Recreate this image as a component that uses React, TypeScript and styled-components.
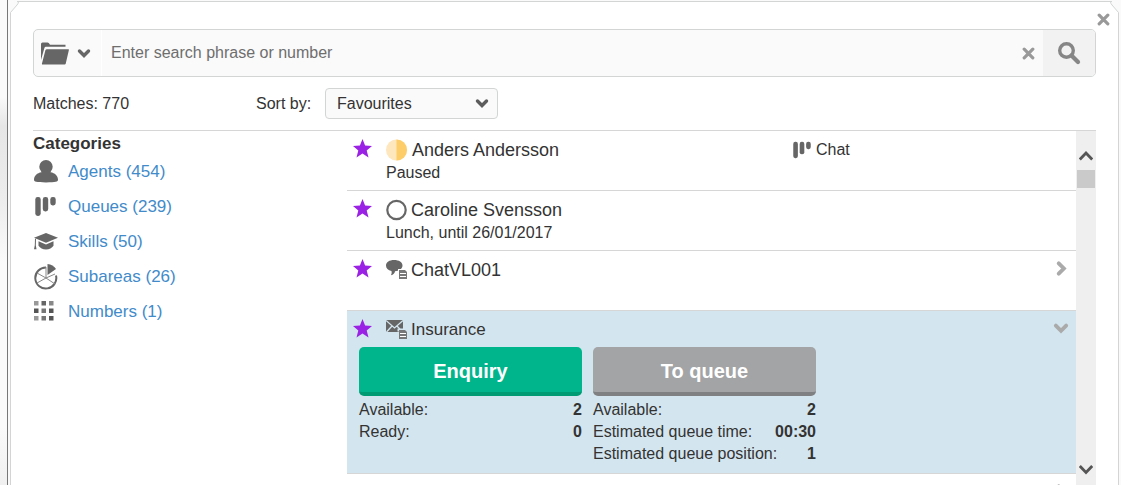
import React from 'react';
import styled, { createGlobalStyle, css } from 'styled-components';

const GlobalStyle = createGlobalStyle`
  *, *::before, *::after { box-sizing: border-box; }
  body {
    margin: 0;
    background: #fafafa;
    color: #333;
    font: 16px/22px "Liberation Sans", Arial, sans-serif;
  }
  button, input, select { font: inherit; color: inherit; margin: 0; }
  svg { display: block; flex: none; }
`;

const Page = styled.div`
  display: flex;
  height: 100vh;
  overflow: hidden;
`;

const Edge = styled.div`
  flex: none;
  width: 8px;
  border-right: 1px solid #777;
  background: linear-gradient(#fafafa 20%, #e6e6e6 26%, #ededed 42%, #fafafa 54%, #fafafa 88%, #f0f0f0);
`;

const Panel = styled.main`
  position: relative;
  flex: 1;
  min-width: 0;
  display: flex;
  flex-direction: column;
  margin: 1px 2px 0;
  padding: 27px 22px 0;
  background: #fff;
  border: 1px solid #d3d5d5;
  border-bottom: 0;
`;

const Corner = styled.svg<{ $right?: boolean }>`
  position: absolute;
  top: -1px;
  ${p => (p.$right ? css`right: -1px; transform: scaleX(-1);` : css`left: -1px;`)}
`;

const IconButton = styled.button`
  display: flex;
  align-items: center;
  justify-content: center;
  padding: 0;
  border: 0;
  background: none;
  color: #999;
  cursor: pointer;
`;

const CloseButton = styled(IconButton)`
  position: absolute;
  top: 10px;
  right: 7px;
  width: 15px;
  height: 15px;
`;

const SearchBar = styled.form`
  flex: none;
  display: flex;
  height: 48px;
  border: 1px solid #d3d5d5;
  border-radius: 5px;
  background: #fafafa;
  overflow: hidden;
`;

const ScopeButton = styled(IconButton)`
  gap: 8px;
  width: 68px;
  padding-right: 3px;
  border-right: 1px solid #fff;
  color: #666;
`;

const SearchInput = styled.input`
  flex: 1;
  min-width: 0;
  padding: 0 9px;
  border: 0;
  outline: 0;
  background: transparent;
  &::placeholder { color: #6e6e6e; opacity: 1; }
`;

const ClearButton = styled(IconButton)`
  width: 30px;
`;

const SubmitButton = styled(IconButton)`
  width: 52px;
  background: #f2f2f2;
  color: #868686;
`;

const Filters = styled.div`
  flex: none;
  display: flex;
  align-items: center;
  height: 53px;
`;

const Matches = styled.div`
  width: 223px;
`;

const SortLabel = styled.label`
  width: 69px;
`;

const SelectWrap = styled.div`
  display: grid;
  align-items: center;
  width: 173px;
  > * { grid-area: 1 / 1; }
  > svg { justify-self: end; margin-right: 9px; pointer-events: none; color: #5c5c5c; }
`;

const Select = styled.select`
  appearance: none;
  width: 100%;
  height: 31px;
  padding: 0 11px;
  border: 1px solid #d3d5d5;
  border-radius: 4px;
  background: #fafafa;
`;

const Body = styled.div`
  flex: 1;
  min-height: 0;
  display: flex;
  border-top: 1px solid #d6d6d6;
`;

const Sidebar = styled.nav`
  flex: none;
  width: 314px;
  font-size: 17px;
`;

const SidebarTitle = styled.h2`
  margin: 0;
  padding-top: 2px;
  font-size: 17px;
  line-height: 21px;
`;

const CategoryList = styled.ul`
  margin: 0;
  padding: 0;
  list-style: none;
`;

const Category = styled.li`
  display: grid;
  grid-template-columns: 25px 1fr;
  column-gap: 10px;
  align-items: center;
  height: 35px;
  > svg { justify-self: center; }
`;

const CategoryLink = styled.a`
  color: #428bca;
  text-decoration: none;
  &:hover { text-decoration: underline; }
`;

const Results = styled.ul`
  flex: 1;
  min-width: 0;
  margin: -1px 0 0;
  padding: 0;
  list-style: none;
  overflow: hidden;
`;

const Row = styled.li<{ $selected?: boolean }>`
  display: grid;
  grid-template-columns: 33px 11fr 7fr 18px;
  align-content: start;
  min-height: 60px;
  padding: 7px 6px 0;
  border-top: 1px solid #d6d6d6;
  background: ${p => (p.$selected ? '#d3e5ee' : '#fff')};
`;

const StarButton = styled(IconButton)`
  justify-content: flex-start;
  height: 21px;
  color: #9a22e4;
`;

const Title = styled.div<{ $small?: boolean }>`
  display: flex;
  align-items: center;
  gap: 4px;
  height: 24px;
  font-size: ${p => (p.$small ? 17 : 18)}px;
`;

const Service = styled.div`
  display: flex;
  align-items: center;
  gap: 5px;
  height: 24px;
`;

const ExpandButton = styled(IconButton)`
  grid-column: 4;
  height: 21px;
  color: #aaa;
`;

const Actions = styled.div`
  grid-column: 1 / -1;
  display: flex;
  gap: 11px;
  padding: 5px 6px 8px;
`;

const Action = styled.section`
  width: 223px;
`;

const ActionButton = styled.button<{ $primary?: boolean }>`
  display: block;
  width: 100%;
  height: 49px;
  margin-bottom: 3px;
  padding: 2px 0 0;
  border: 0;
  border-bottom: 4px solid ${p => (p.$primary ? '#009a73' : '#7f8081')};
  border-radius: 5px;
  background: ${p => (p.$primary ? '#00b58c' : '#a3a4a5')};
  color: #fff;
  font-size: 20px;
  font-weight: bold;
  cursor: pointer;
`;

const Stat = styled.div`
  display: flex;
  justify-content: space-between;
`;

const Scrollbar = styled.div`
  flex: none;
  display: flex;
  flex-direction: column;
  justify-content: space-between;
  width: 20px;
  padding: 16px 0 7px;
  background: #efefef;
`;

const ScrollButton = styled(IconButton)`
  width: 20px;
  height: 18px;
  color: #555;
`;

const Thumb = styled.div`
  height: 18px;
  margin: 5px 1px 0;
  background: #cacaca;
`;

const chevrons = {
  down: 'M2.500 3l4.500 4.500L11.500 3',
  right: 'M5 1l4.500 4.500L5 10',
};

function Chevron({ to, size = 14 }: { to: keyof typeof chevrons; size?: number }) {
  return (
    <svg width={size} height={size - 3} viewBox="0 0 14 11" overflow="visible" fill="none" stroke="currentColor" strokeWidth="3.400">
      <path d={chevrons[to]} strokeLinecap="round" />
    </svg>
  );
}

const ScrollArrow = ({ up }: { up?: boolean }) => (
  <svg width="14" height="11" viewBox="0 0 14 11" fill="none" stroke="currentColor" strokeWidth="2.800">
    <path d={up ? 'M.8 8.500L7 2l6.200 6.500' : 'M.8 2L7 8.500 13.200 2'} />
  </svg>
);

const Cross = () => (
  <svg width="13" height="13" viewBox="0 0 13 13" stroke="currentColor" strokeWidth="3.200" strokeLinecap="round">
    <path d="M2.200 2.200l8.600 8.600M10.800 2.200l-8.600 8.600" />
  </svg>
);

const Folder = () => (
  <svg width="28" height="23" viewBox="0 0 28 23" fill="currentColor">
    <path d="M0 18V2q0-1.500 1.500-1.500h5Q8 .5 8.500 2l.5.800h15.500v2H5Q3.800 4.800 3.400 6z" />
    <path d="M6 7.300h21.500q.6 0 .4.800l-3.200 13.600q-.2.800-1 .8H1.500q-.8 0-.6-.8L4.400 8.300q.3-1 1.600-1z" />
  </svg>
);

const Magnifier = () => (
  <svg width="24" height="24" viewBox="0 0 24 24" fill="none" stroke="currentColor">
    <circle cx="9.500" cy="9.500" r="6.800" strokeWidth="3.400" />
    <path d="M14.500 14.500l6.500 6.500" strokeWidth="4.200" strokeLinecap="round" />
  </svg>
);

const Star = () => (
  <svg width="19" height="19" viewBox="0 0 19 19" fill="currentColor">
    <path d="M9.500 0l2.600 6.500 6.900.500-5.300 4.400 1.800 7-6-3.900-6 3.900 1.800-7L0 7l6.900-.5z" />
  </svg>
);

const Person = () => (
  <svg width="24" height="23" viewBox="0 0 24 23" fill="#666">
    <ellipse cx="12" cy="6.800" rx="6.700" ry="6.800" />
    <path d="M7.500 11h9v1.300c4.500.7 7.200 3.500 7.500 7.200.1 2.200-1.500 3-12 3s-12.100-.8-12-3c.3-3.700 3-6.500 7.500-7.200z" />
  </svg>
);

const Bars = ({ size = 21 }: { size?: number }) => (
  <svg width={size} height={size} viewBox="0 0 21 21" fill="#666">
    <rect x=".3" y="1" width="5.400" height="19" rx="2.400" />
    <rect x="7.800" y="1" width="5.400" height="14.500" rx="2.400" />
    <rect x="15.300" y="1" width="5.400" height="8.500" rx="2.400" />
  </svg>
);

const Cap = () => (
  <svg width="24" height="17" viewBox="0 0 24 17" fill="#666">
    <path d="M12 0l12 4.800L12 9.800 0 4.800z" />
    <path d="M4.500 8.300L12 11.400l7.500-3.100v4.500Q17 16.500 12 16.500t-7.500-3.700z" />
    <path d="M1 5.500l1 .4-.2 6.300.7 4H0l.8-4z" />
  </svg>
);

const Pie = () => (
  <svg width="24" height="26" viewBox="0 0 24 26" fill="none" stroke="#666">
    <path d="M12 3.500A10.500 10.500 0 1 0 22 11.500" strokeWidth="2" />
    <path d="M12 3v11l-9 5M12 14l9 6M12 14L3 9M12 14l9-4" strokeWidth="1" stroke="#888" />
    <path d="M13.500 0q5.500.500 8.500 5l-8.500 6z" fill="#666" stroke="none" />
  </svg>
);

const dots = ['#999', '#666', '#888', '#555', '#777', '#555', '#999', '#777', '#555'];
const DotGrid = () => (
  <svg width="23" height="22" viewBox="0 0 23 22">
    {dots.map((c, i) => (
      <rect key={i} x={(i % 3) * 7.5} y={Math.floor(i / 3) * 7.5} width="4.500" height="4.500" fill={c} />
    ))}
  </svg>
);

const Paused = () => (
  <svg width="22" height="22" viewBox="0 0 22 22">
    <circle cx="10.500" cy="11" r="10.500" fill="#fee6bd" />
    <path d="M10.500.5a10.500 10.500 0 0 1 0 21z" fill="#fdcd69" />
  </svg>
);

const Away = () => (
  <svg width="21" height="22" viewBox="0 0 21 22">
    <circle cx="10.500" cy="11" r="9.200" fill="#fff" stroke="#666" strokeWidth="2.200" />
  </svg>
);

const Sheet = () => (
  <>
    <path d="M14 10h5l2 2v7h-8v-9z" fill="#777" />
    <path d="M14 13.500h6M14 16.500h6" stroke="#fff" strokeWidth="1" />
  </>
);

const ChatIcon = () => (
  <svg width="21" height="20" viewBox="0 0 21 20">
    <path d="M8 0c5 0 8.500 2.200 8.500 5.500S13 11 9 11.300q-.5 3-4 4 1.200-2 .5-4.300C2 10.200 0 8.300 0 5.500 0 2.200 3.500 0 8 0z" fill="#666" />
    <path d="M12 9h7v3h-7z" fill="#fff" />
    <Sheet />
  </svg>
);

const MailIcon = () => (
  <svg width="21" height="20" viewBox="0 0 21 20">
    <path d="M0 0h17v12H0z" fill="#666" />
    <path d="M0 .5l8.500 7.500L17 .5M.5 12l5.500-6M16.500 12L11 6" fill="none" stroke="#d3e5ee" strokeWidth="1.300" />
    <path d="M11.500 8.500H21v3h-9.500z" fill="#d3e5ee" />
    <Sheet />
  </svg>
);

const categories = [
  { label: 'Agents (454)', icon: <Person /> },
  { label: 'Queues (239)', icon: <Bars /> },
  { label: 'Skills (50)', icon: <Cap /> },
  { label: 'Subareas (26)', icon: <Pie /> },
  { label: 'Numbers (1)', icon: <DotGrid /> },
];

interface ResultProps {
  name: string;
  icon: React.ReactNode;
  note?: string;
  service?: string;
  expand?: 'right' | 'down';
  children?: React.ReactNode;
}

const Expander = ({ to }: { to: 'right' | 'down' }) => (
  <ExpandButton type="button" aria-label="Details"><Chevron to={to} size={16} /></ExpandButton>
);

function Result({ name, icon, note, service, expand, children }: ResultProps) {
  return (
    <Row $selected={expand === 'down'}>
      <StarButton type="button" aria-label="Favourite"><Star /></StarButton>
      <div>
        <Title $small={expand === 'down'}>{icon}{name}</Title>
        {note}
      </div>
      {service && <Service><Bars size={18} />{service}</Service>}
      {expand && <Expander to={expand} />}
      {children}
    </Row>
  );
}

const StatLine = ({ label, value }: { label: string; value: string }) => (
  <Stat><span>{label}</span><b>{value}</b></Stat>
);

const CornerCut = ({ right }: { right?: boolean }) => (
  <Corner $right={right} width="9" height="12" viewBox="0 0 9 12">
    <path d="M0 0h9L8 2.500 0 12z" fill="#fafafa" />
    <path d="M7 .5h2M8.500 .5q0 2-1.500 3.500L.5 11.500" fill="none" stroke="#d3d5d5" />
  </Corner>
);

export default function App() {
  return (
    <Page>
      <GlobalStyle />
      <Edge />
      <Panel>
        <CornerCut />
        <CornerCut right />
        <CloseButton type="button" aria-label="Close"><Cross /></CloseButton>
        <SearchBar>
          <ScopeButton type="button" aria-label="Search in"><Folder /><Chevron to="down" /></ScopeButton>
          <SearchInput aria-label="Search" placeholder="Enter search phrase or number" />
          <ClearButton type="reset" aria-label="Clear"><Cross /></ClearButton>
          <SubmitButton type="submit" aria-label="Search"><Magnifier /></SubmitButton>
        </SearchBar>
        <Filters>
          <Matches>Matches: 770</Matches>
          <SortLabel htmlFor="sort">Sort by:</SortLabel>
          <SelectWrap>
            <Select id="sort" defaultValue="fav">
              <option value="fav">Favourites</option>
            </Select>
            <Chevron to="down" />
          </SelectWrap>
        </Filters>
        <Body>
          <Sidebar>
            <SidebarTitle>Categories</SidebarTitle>
            <CategoryList>
              {categories.map(c => (
                <Category key={c.label}>
                  {c.icon}
                  <CategoryLink href="#">{c.label}</CategoryLink>
                </Category>
              ))}
            </CategoryList>
          </Sidebar>
          <Results>
            <Result name="Anders Andersson" icon={<Paused />} note="Paused" service="Chat" />
            <Result name="Caroline Svensson" icon={<Away />} note="Lunch, until 26/01/2017" />
            <Result name="ChatVL001" icon={<ChatIcon />} expand="right" />
            <Result name="Insurance" icon={<MailIcon />} expand="down">
              <Actions>
                <Action>
                  <ActionButton type="button" $primary>Enquiry</ActionButton>
                  <StatLine label="Available:" value="2" />
                  <StatLine label="Ready:" value="0" />
                </Action>
                <Action>
                  <ActionButton type="button">To queue</ActionButton>
                  <StatLine label="Available:" value="2" />
                  <StatLine label="Estimated queue time:" value="00:30" />
                  <StatLine label="Estimated queue position:" value="1" />
                </Action>
              </Actions>
            </Result>
            <Row><Expander to="right" /></Row>
          </Results>
          <Scrollbar>
            <div>
              <ScrollButton type="button" aria-label="Scroll up"><ScrollArrow up /></ScrollButton>
              <Thumb />
            </div>
            <ScrollButton type="button" aria-label="Scroll down"><ScrollArrow /></ScrollButton>
          </Scrollbar>
        </Body>
      </Panel>
    </Page>
  );
}
